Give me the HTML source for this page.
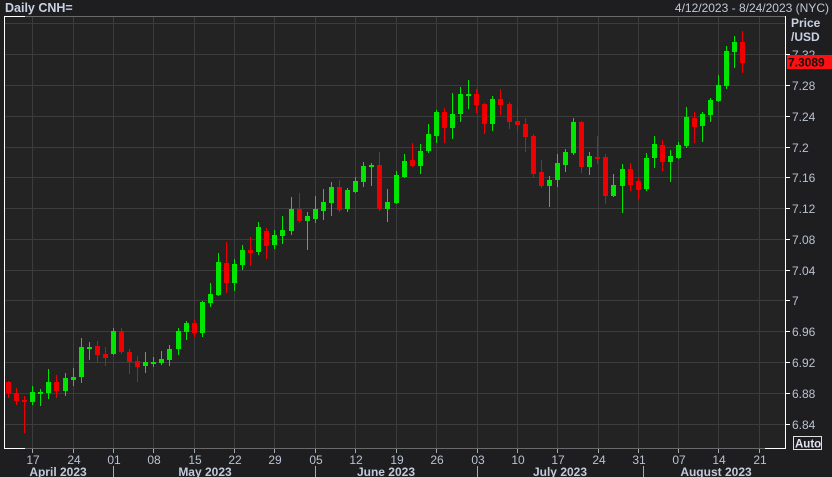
<!DOCTYPE html>
<html><head><meta charset="utf-8"><style>
body{margin:0;width:832px;height:477px;background:#1e1e20;overflow:hidden;font-family:"Liberation Sans",sans-serif}
svg{position:absolute;left:0;top:0}
</style></head><body>
<svg id="s" width="832" height="477" xmlns="http://www.w3.org/2000/svg">
<rect x="4" y="16" width="781" height="432" fill="#222322"/>
<g id="grid" stroke="#3b3c3b" stroke-width="1"></g>
<g id="c"></g>
<line x1="4" y1="16.5" x2="785" y2="16.5" stroke="#6a6a6a"/>
<line x1="4" y1="16.5" x2="25" y2="16.5" stroke="#fff"/>
<line x1="4.5" y1="16" x2="4.5" y2="448" stroke="#fff"/>
<line x1="4" y1="448.5" x2="785" y2="448.5" stroke="#6a6a6a"/>
<line x1="4" y1="448.5" x2="25" y2="448.5" stroke="#fff"/>
<line x1="765" y1="448.5" x2="786" y2="448.5" stroke="#fff"/>
<line x1="785.5" y1="16" x2="785.5" y2="449" stroke="#fff"/>
<g id="ax" fill="#b8c2d0" font-size="12"></g>
<text x="5" y="12" fill="#c9d2e2" font-size="12.5" font-weight="bold">Daily CNH=</text>
<text x="829" y="12" fill="#c0c8d6" font-size="12" text-anchor="end">4/12/2023 - 8/24/2023 (NYC)</text>
<text x="791" y="27" fill="#c9d2e2" font-size="12" font-weight="bold">Price</text>
<text x="791" y="41" fill="#c9d2e2" font-size="12" font-weight="bold">/USD</text>
<rect x="787" y="55" width="45" height="14" fill="#ff1010"/>
<text x="788" y="66.5" fill="#111" font-size="12" font-weight="bold">7.3089</text>
<rect x="793.5" y="436.5" width="28" height="13" fill="none" stroke="#e0e0e0"/>
<text x="795" y="447.5" fill="#dde4f0" font-size="11.5" font-weight="bold">Auto</text>
</svg>
<script>
var NS="http://www.w3.org/2000/svg";
function el(p,t,a,txt){var e=document.createElementNS(NS,t);for(var k in a)e.setAttribute(k,a[k]);if(txt)e.textContent=txt;p.appendChild(e);return e;}
var g=document.getElementById('grid'),ax=document.getElementById('ax'),c=document.getElementById('c');
var hy=[23,54,85,116,147,177,208,239,270,300,331,362,393,424];
var lb=['','7.32','7.28','7.24','7.2','7.16','7.12','7.08','7.04','7','6.96','6.92','6.88','6.84'];
hy.forEach(function(y,i){el(g,'line',{x1:5,x2:785,y1:y+.5,y2:y+.5});if(lb[i]){el(ax,'line',{x1:785,x2:790,y1:y+.5,y2:y+.5,stroke:'#fff'});el(ax,'text',{x:792,y:y+5},lb[i]);}});
var vx=[32,73,113,153,194,234,274,315,355,396,436,477,517,557,598,638,678,718,759];
var vl=['17','24','01','08','15','22','29','05','12','19','26','03','10','17','24','31','07','14','21'];
vx.forEach(function(x,i){if(x<785)el(g,'line',{x1:x+.5,x2:x+.5,y1:17,y2:448});el(ax,'line',{x1:x+.5,x2:x+.5,y1:449,y2:453,stroke:'#aaa'});el(ax,'text',{x:x+1,y:464,'text-anchor':'middle'},vl[i]);});
[113,315,477,643].forEach(function(x){el(ax,'line',{x1:x+.5,x2:x+.5,y1:466,y2:477,stroke:'#aaa'});});
[['April 2023',58],['May 2023',205],['June 2023',386],['July 2023',560],['August 2023',716]].forEach(function(m){el(ax,'text',{x:m[1],y:476,'text-anchor':'middle','font-weight':'bold',fill:'#c3cbdb'},m[0]);});
var d=[
[8,381.7,392.7,380.7,397.7,0],[16,393,400.7,387.7,405,0],[24,400,402,395.7,432.7,0],[32,392,401.7,386,405,1],[40,392,393.3,389,405.7,1],[48,382,393,369,399,1],[56,382,391,375,397.7,0],[65,378,391,373,395.7,1],[73,376.7,380,367.7,385.7,1],[81,346.7,377,337.7,382.7,1],[89,346.7,349,342,360,1],[97,345.7,355,341,362.7,0],[105,354,358,346.7,366,0],[113,330.7,353.7,328,355,1],[121,330.7,352,328,354,0],[129,351.7,361.7,349,374,0],[137,361,367,356,382,0],[145,362,365.7,352,373,1],[153,362,363.7,357,367,1],[161,358.7,363,351,364.7,1],[169,349,359.7,345,366,1],[178,330.7,349,328,354.7,1],[186,323,331.7,320.7,340,1],[194,323,332.7,320,337.3,0],[202,301.7,333,301,336.7,1],[210,294,302.7,283,307,1],[218,262,295,253,296,1],[226,263,282.7,241.7,293,0],[234,264,282.7,259,291,1],[242,250,264.7,244.7,270,1],[250,249.7,253,236.7,265.7,0],[258,227,252,222,255,1],[266,231,245.7,228,259,0],
[274,235,245,230,249,1],[282,230,235.7,216,243.7,1],[291,209,231,197,235,1],[299,209,220.7,193,222.7,0],[307,216,220.7,212,250,1],[315,209,218.7,196,222.7,1],[323,202,210.7,189,219.7,1],[331,187,202.7,182,215.7,1],[339,187,209.7,180,211.7,0],[347,190,208.7,188,211.7,1],[355,181,192,177,193,1],[363,166,181.7,162,186.7,1],[371,165,166.7,163,185.7,1],[379,165,208.7,152,210.7,0],[387,202,208.7,189,221.7,1],[396,175,202.7,171,203.7,1],[404,161,176.7,154,177.7,1],[412,160,166,143,167,0],[420,151,166,144,174,1],[428,134,151,124,153,1],[436,112,135.7,110,143,1],[444,112,127.7,108,143,0],[452,114,127.7,93,139,1],[460,94,113.7,87,122,1],[468,94,95,80,109,1],[476,94,104.7,89,113,0],[484,103.7,123.7,103,133.7,0],[492,99,123.7,96,130.7,1],[500,99,104.7,89,114.7,0],[509,104,121.7,102,129,0],[517,121,124.7,108,132.7,0],[525,124,136.7,118,151.7,0],[533,135.7,173.7,133.7,177.7,0],[541,172,185.7,160,187.7,0],[549,180,185.7,176,206.7,1],
[557,163,179.7,154,186.7,1],[565,152,164.7,149,171.7,1],[573,122,153,118,154.7,1],[581,122,166.7,120.7,173,0],[589,156,166.7,152,174.7,1],[597,157,158.7,136,163.7,0],[605,157,195.7,154,203.7,0],[613,185,195.7,174,196.7,1],[622,169,185.7,164,212.7,1],[630,169,184.7,163,190.7,0],[638,181,189.7,177,199.7,0],[646,158,188.7,153,190.7,1],[654,144,157.7,136,167.7,1],[662,145,161.7,140,170.7,0],[670,156,161.7,150,181.7,1],[678,145,157.7,142,158.7,1],[686,117,145.7,107,147.7,1],[694,118,126.7,112,142.7,0],[702,114,125.7,111.7,141.7,1],[710,100,114.7,97.7,121.7,1],[718,85,101,75,102,1],[726,51,85.7,46,88.7,1],[734,42,51.7,36,67.7,1],[742,42,62.7,31,72.7,0]];
d.forEach(function(k){var col=k[5]?'#00e600':'#ee0000';var x=Math.round(k[0]);
el(c,'rect',{x:x,y:Math.round(k[3]),width:1,height:Math.max(1,Math.round(k[4]-k[3])),fill:col});
el(c,'rect',{x:x-2,y:Math.round(k[1]),width:5,height:Math.max(2,Math.round(k[2]-k[1])),fill:col});});
</script>
</body></html>
